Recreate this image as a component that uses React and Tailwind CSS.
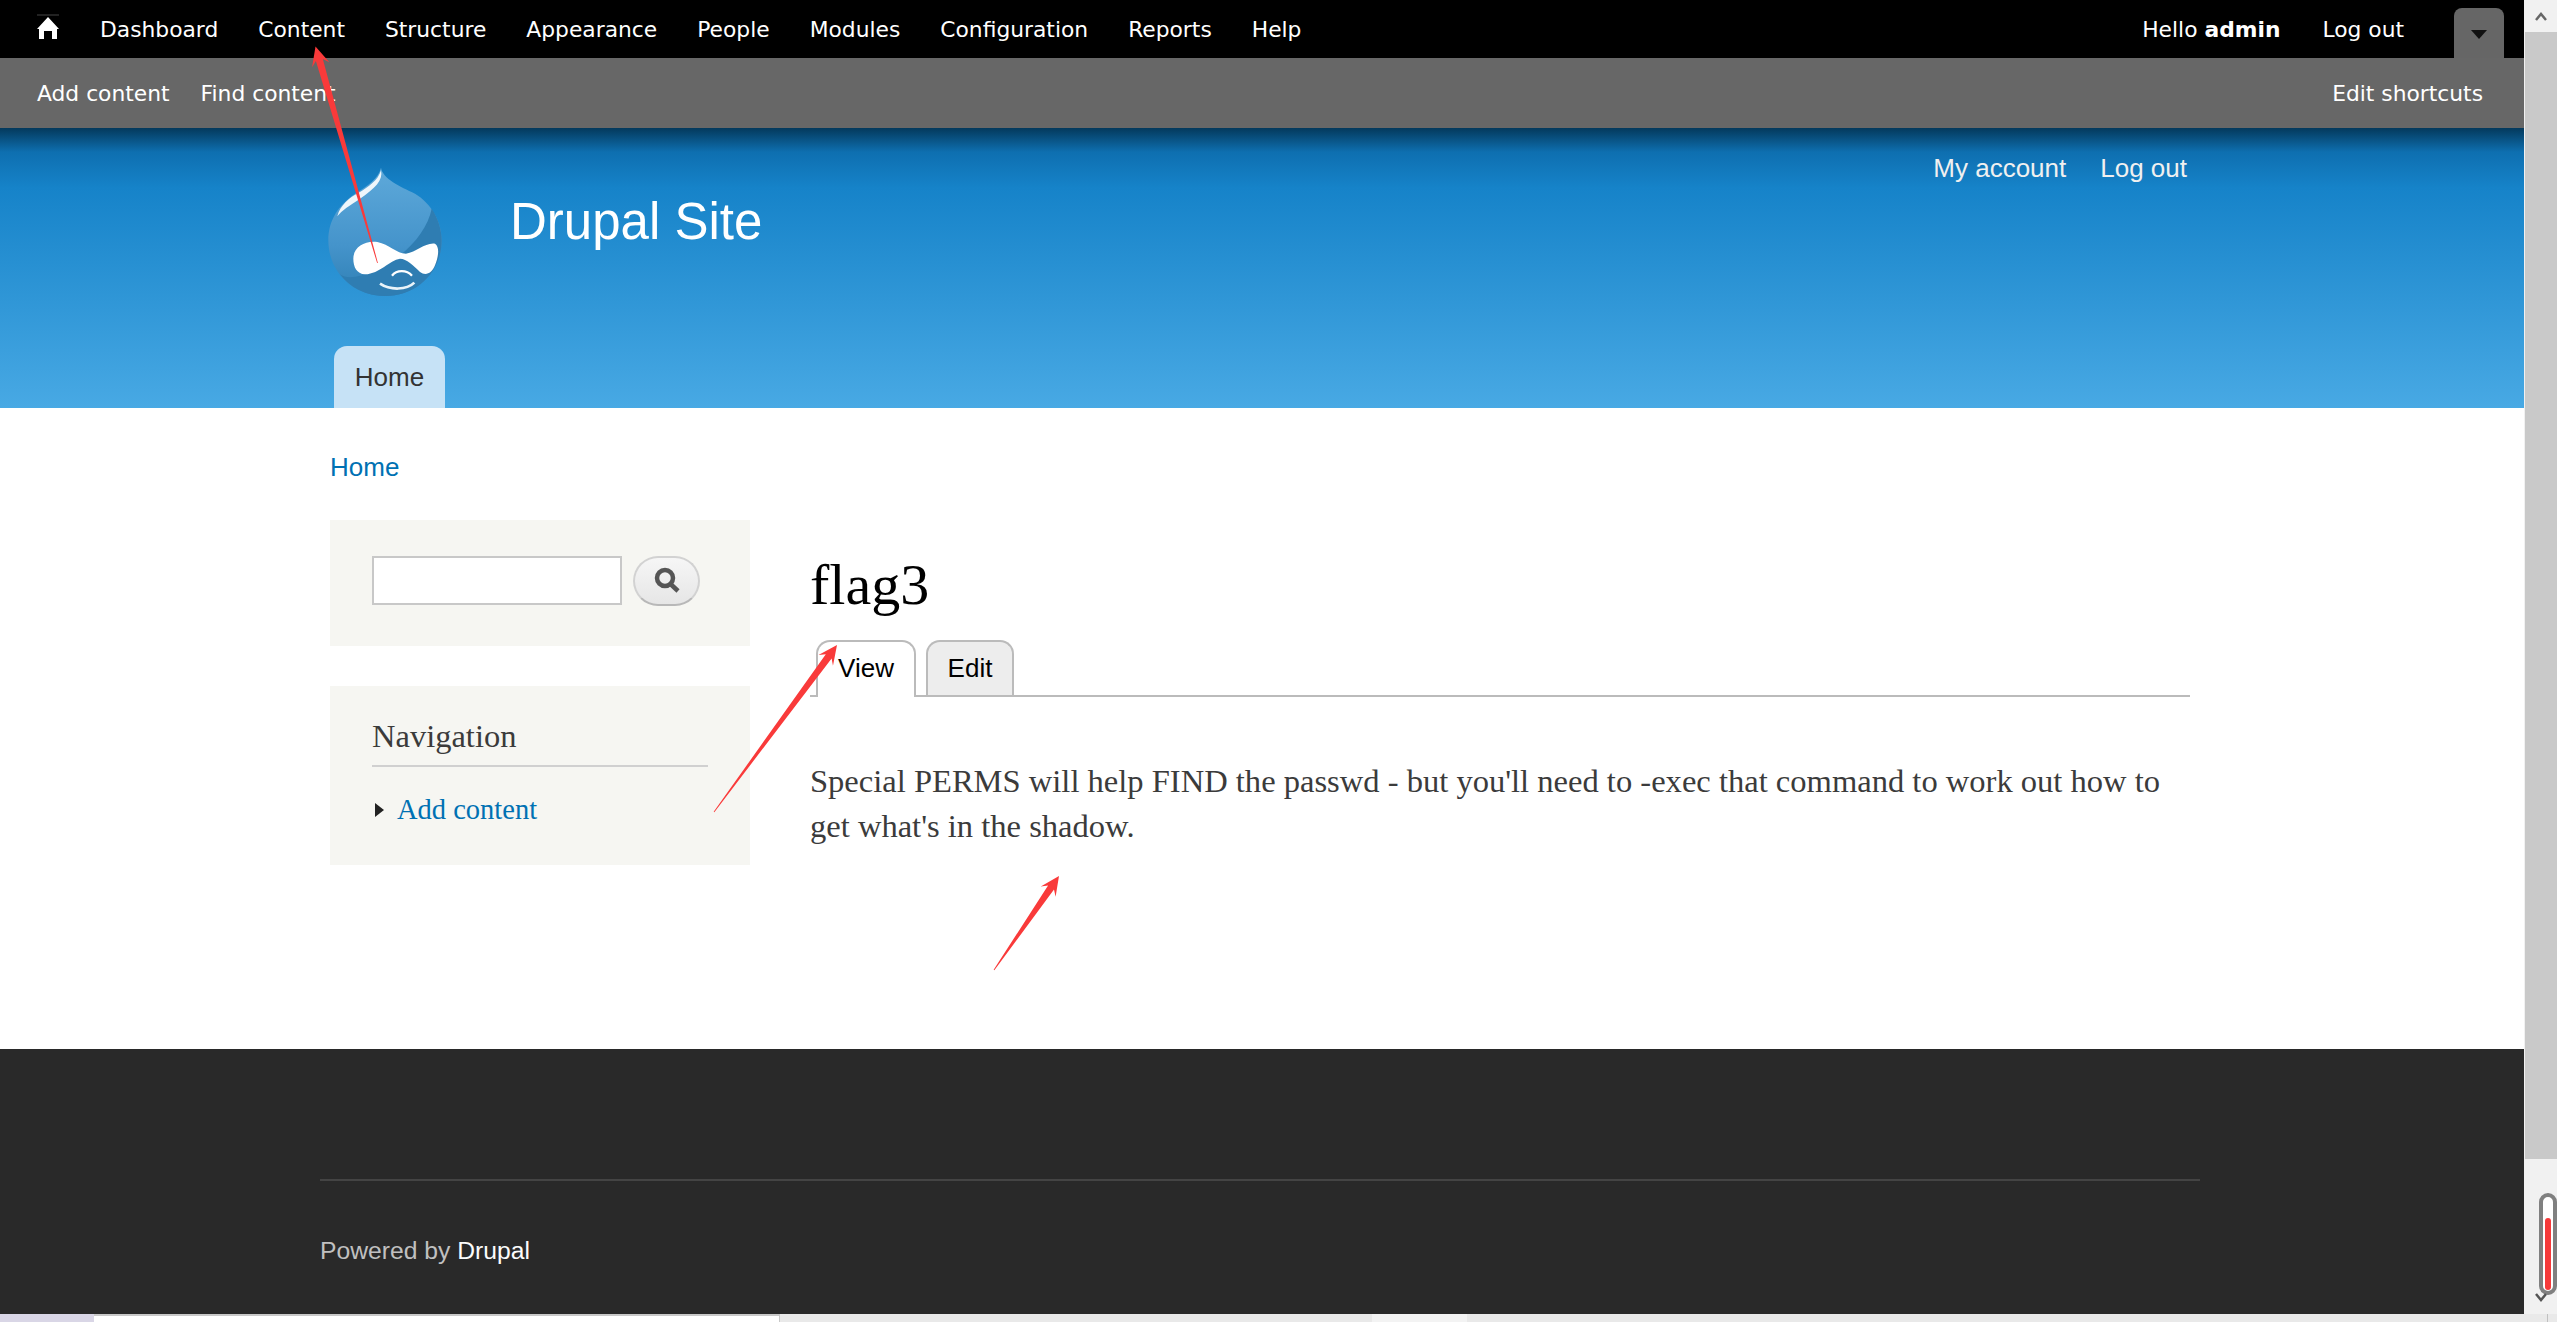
const topLinks = ["Dashboard", "Content", "Structure", "Appearance", "People", "Modules", "Configuration", "Reports", "Help"];

// red annotation arrows drawn on top of the screenshot: [tipX, tipY, tailX, tailY]
const arrows = [
  [315.5, 46.5, 377.5, 263],
  [837, 645, 714, 812],
  [1059, 876, 994, 970],
];

const arrowPoints = ([tx, ty, bx, by]) => {
  const len = Math.hypot(bx - tx, by - ty);
  const ux = (bx - tx) / len;
  const uy = (by - ty) / len;
  const at = (along, side) => `${tx + ux * along - uy * side},${ty + uy * along + ux * side}`;
  return [at(0, 0), at(19, 9), at(14, 3.6), at(len, 0.4), at(len, -0.4), at(14, -3.6), at(19, -9)].join(" ");
};

const HomeIcon = () => (
  <svg width="24" height="26" viewBox="0 0 24 26" className="-mt-[8px] block">
    <path d="M1 1h22" stroke="#444" strokeWidth="1" />
    <path d="M12 3 L23 15 H21 V25 H16 V17 H8 V25 H3 V15 H1 Z" fill="#fff" />
  </svg>
);

const DrupalLogo = () => (
  <svg width="114" height="130" viewBox="85 50 340 390" className="block shrink-0">
    <defs>
      <linearGradient id="drop" x1="0" y1="0" x2="0" y2="1">
        <stop offset="0" stopColor="#5ea9da" />
        <stop offset="0.6" stopColor="#4594cb" />
        <stop offset="1" stopColor="#2f7fb4" />
      </linearGradient>
    </defs>
    <path
      d="M243 52 C248 85 300 108 345 130 C395 160 425 215 425 270 C425 365 350 437 255 437 C160 437 85 365 85 270 C85 210 115 165 165 130 C205 105 235 85 243 52 Z"
      fill="url(#drop)"
    />
    <path
      d="M395 175 C415 205 425 240 425 270 C425 365 350 437 255 437 C200 437 150 412 120 372 C150 395 230 370 300 315 C350 275 385 225 395 175 Z"
      fill="#2f7db2"
    />
    <path
      d="M243 60 C250 90 225 115 180 145 C150 165 125 180 112 198 C120 165 150 140 175 128 C205 110 235 90 243 60 Z"
      fill="#fff"
      opacity="0.9"
    />
    <path
      d="M160 325 C160 290 195 270 232 275 C268 282 290 310 318 310 C350 306 375 276 405 280 C420 290 415 320 405 345 C395 372 375 376 360 365 C340 345 320 325 300 325 C268 330 240 370 195 372 C170 370 160 350 160 325 Z"
      fill="#fff"
    />
    <path d="M276 376 C290 358 320 358 336 376" fill="none" stroke="#fff" strokeWidth="7" />
    <path d="M240 400 C270 420 320 420 343 397" fill="none" stroke="#e9f3f9" strokeWidth="8" />
  </svg>
);

const SearchIcon = () => (
  <svg width="30" height="30" viewBox="0 0 30 30" className="block">
    <circle cx="13" cy="12" r="8" fill="none" stroke="#555" strokeWidth="4.5" />
    <path d="M18.5 18 L26 25" stroke="#555" strokeWidth="4.5" />
  </svg>
);

const App = () => {
  return (
    <div className="relative flex h-[1322px] flex-col overflow-hidden bg-white font-['Liberation_Serif',serif]">
      <div className="flex min-h-0 flex-1">
        <div className="flex min-w-0 flex-1 flex-col">
          {/* TOOLBAR */}
          <div className="flex h-[58px] items-center bg-black pt-[3px] pl-[36px] font-['DejaVu_Sans',sans-serif] text-[21.8px] text-white">
            <HomeIcon />
            <div className="ml-[40px] flex gap-[40px]">
              {topLinks.map((link) => (
                <span key={link}>{link}</span>
              ))}
            </div>
            <span className="ml-auto">
              Hello <b>admin</b>
            </span>
            <span className="ml-[42px]">Log out</span>
            <div className="mr-[20px] ml-[50px] flex h-[50px] w-[50px] justify-center self-end rounded-t-[8px] bg-[#666] pt-[22px]">
              <svg width="16" height="9" viewBox="0 0 16 9" className="block">
                <path d="M0 0H16L8 9Z" fill="#111" />
              </svg>
            </div>
          </div>
          <div className="flex h-[70px] items-center justify-between bg-[#676767] pt-[3px] pr-[41px] pl-[37px] font-['DejaVu_Sans',sans-serif] text-[21.8px] text-white">
            <div className="flex gap-[31px]">
              <span>Add content</span>
              <span>Find content</span>
            </div>
            <span>Edit shortcuts</span>
          </div>

          {/* HEADER */}
          <div className="flex h-[280px] flex-col bg-[linear-gradient(#04395c_0px,#0e6fb0_24px,#1683c9_60px,#48a9e4_100%)] font-['Liberation_Sans',sans-serif] text-white">
            <div className="flex pr-[337px] pl-[328px]">
              <div className="mt-[39px]">
                <DrupalLogo />
              </div>
              <h1 className="mt-[64px] ml-[68px] text-[51px] leading-[60px]">Drupal Site</h1>
              <div className="mt-[25px] ml-auto flex gap-[34px] text-[26px] leading-[30px] text-[#f0f0f0]">
                <span>My account</span>
                <span>Log out</span>
              </div>
            </div>
            <div className="mt-auto ml-[334px] flex h-[62px] w-[111px] items-center justify-center rounded-t-[13px] bg-[#c6e2f6] text-[26px] text-[#333]">
              Home
            </div>
          </div>

          {/* MAIN */}
          <div className="flex-1 bg-white pt-[44px] pl-[330px]">
            <div className="font-['Liberation_Sans',sans-serif] text-[26px] leading-[30px] text-[#0071b3]">Home</div>
            <div className="mt-[38px] flex">
              <div className="flex w-[420px] flex-col gap-[40px]">
                <div className="flex h-[126px] gap-[11px] bg-[#f6f6f2] pt-[36px] pl-[42px]">
                  <input className="h-[49px] w-[250px] border-2 border-[#c8c8c8] bg-white" />
                  <button className="flex h-[50px] w-[67px] items-center justify-center rounded-[25px] border-2 border-[#d2d2d2] border-b-[#b8b8b8] bg-[linear-gradient(#f6f6f6,#e6e6e6)]">
                    <SearchIcon />
                  </button>
                </div>
                <div className="h-[179px] bg-[#f6f6f2] pt-[31px] pl-[42px]">
                  <h2 className="w-[336px] border-b-2 border-[#d0d0d0] pb-[10px] text-[32.5px] leading-[38px] text-[#3b3b3b]">
                    Navigation
                  </h2>
                  <div className="mt-[26px] ml-[3px] flex items-center gap-[13px]">
                    <svg width="9" height="14" viewBox="0 0 9 14" className="block">
                      <path d="M0 0L9 7L0 14Z" fill="#222" />
                    </svg>
                    <span className="text-[28.5px] leading-[34px] text-[#0071b3]">Add content</span>
                  </div>
                </div>
              </div>
              <div className="ml-[60px] w-[1380px]">
                <h1 className="mt-[30px] text-[58px] leading-[70px] text-black">flag3</h1>
                <div className="mt-[20px] flex h-[57px] gap-[10px] border-b-2 border-[#bbb] pl-[6px] font-['Liberation_Sans',sans-serif] text-[26px] text-black">
                  <div className="z-10 flex h-[57px] w-[100px] items-center justify-center rounded-t-[14px] border-2 border-b-0 border-[#bbb] bg-white pb-[3px]">
                    View
                  </div>
                  <div className="flex h-[55px] w-[88px] items-center justify-center rounded-t-[14px] border-2 border-b-0 border-[#bbb] bg-[#ededed]">
                    Edit
                  </div>
                </div>
                <p className="mt-[62px] text-[32.55px] leading-[45px] text-[#3b3b3b]">
                  Special PERMS will help FIND the passwd - but you'll need to -exec that command to work out how to get
                  what's in the shadow.
                </p>
              </div>
            </div>
          </div>

          {/* FOOTER */}
          <div className="h-[265px] bg-[#292929] pt-[130px] pr-[324px] pl-[320px] font-['Liberation_Sans',sans-serif] text-[24.7px] text-[#c0c0c0]">
            <div className="h-[2px] bg-[#444]" />
            <div className="mt-[55px] leading-[30px]">
              Powered by <span className="text-[#fcfcfc]">Drupal</span>
            </div>
          </div>
        </div>

        {/* SCROLLBAR */}
        <div className="relative w-[33px] bg-[#f1f1f1]">
          <div className="flex h-[32px] items-center justify-center">
            <svg width="12" height="10" viewBox="0 0 12 10" className="block">
              <path d="M1 9L6 3L11 9" fill="none" stroke="#666" strokeWidth="2.5" />
            </svg>
          </div>
          <div className="ml-px h-[1127px] bg-[#c9c9c9]" />
          <div className="absolute top-[1193px] left-[15px] h-[102px] w-[18px] rounded-full border-4 border-[#808080] bg-white pt-[21px] pl-[2px]">
            <div className="h-[72px] w-[6px] rounded-full bg-[#f63a3a]" />
          </div>
          <svg width="12" height="9" viewBox="0 0 12 9" className="absolute top-[1293px] left-[11px] block">
            <path d="M1 1L6 7L11 1" fill="none" stroke="#555" strokeWidth="2.5" />
          </svg>
        </div>
      </div>

      {/* TASKBAR SLIVER */}
      <div className="flex h-[8px] bg-[#e9e9e9]">
        <div className="w-[94px] bg-[#d9d6e6]" />
        <div className="w-[686px] border-t-2 border-r border-[#c8c8c8] bg-white" />
        <div className="ml-[592px] w-[95px] bg-[#f3f3f3]" />
        <div className="ml-[1080px] w-px bg-[#c0c0c0]" />
      </div>

      {/* ANNOTATIONS */}
      <svg width="2557" height="1322" className="pointer-events-none absolute top-0 left-0 z-20">
        {arrows.map((a) => (
          <polygon key={a[0]} points={arrowPoints(a)} fill="#f93a3a" />
        ))}
      </svg>
    </div>
  );
};

export default App;
